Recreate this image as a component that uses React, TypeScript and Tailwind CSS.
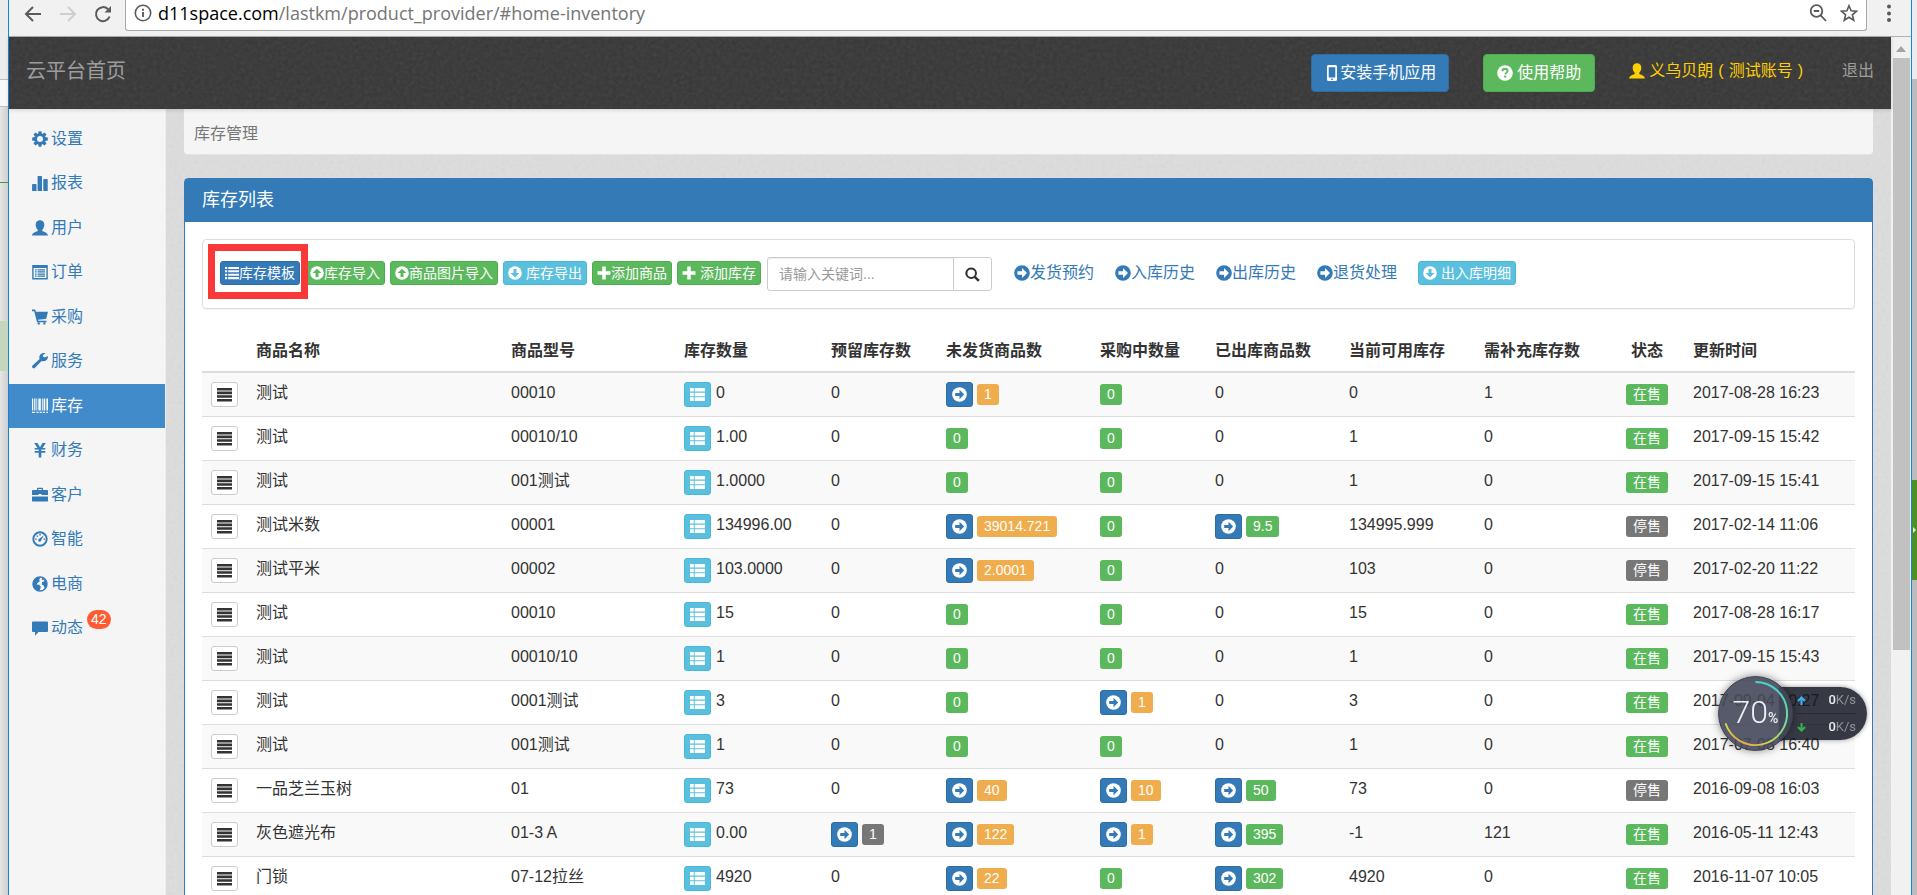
import type { ReactNode } from "react";
import { clsx } from "clsx";

type GlyphName =
  | "cog"
  | "stats"
  | "user"
  | "listAlt"
  | "cart"
  | "wrench"
  | "barcode"
  | "yen"
  | "briefcase"
  | "dashboard"
  | "globe"
  | "comment"
  | "phone"
  | "question"
  | "list"
  | "thList"
  | "justify"
  | "plus"
  | "search"
  | "up"
  | "down"
  | "right";

const ARROW = "M8 2.900 13 8 8 13.100V9.700H3.400V6.300H8z";

const circleArrow = (angle: number) => (
  <>
    <mask id={`arrow-${angle}`}>
      <rect width="16" height="16" fill="#fff" />
      <path d={ARROW} transform={`rotate(${angle} 8 8)`} fill="#000" />
    </mask>
    <circle cx="8" cy="8" r="7.800" mask={`url(#arrow-${angle})`} />
  </>
);

const GLYPHS: Record<GlyphName, ReactNode> = {
  cog: (
    <>
      <circle cx="8" cy="8" r="4.400" fill="none" stroke="currentColor" strokeWidth="2.800" />
      {[0, 45, 90, 135, 180, 225, 270, 315].map((a) => (
        <path key={a} d="M6.600 .2h2.800l.5 3H6.100z" transform={`rotate(${a} 8 8)`} />
      ))}
    </>
  ),
  stats: (
    <path d="M.8 9h3q.7 0 .7.7V16H.1V9.700q0-.7.7-.7zM6.300 1h3q.7 0 .7.7V16H5.600V1.700q0-.7.7-.7zM12 4h3q.7 0 .7.7V16h-4.400V4.700Q11.300 4 12 4z" />
  ),
  user: (
    <path d="M8 .3c2.700 0 4.300 1.700 4.300 4.200 0 2.300-.8 4.200-2 5.300v1.100c2.700 1 5.500 2 5.700 4.600H0c.2-2.600 3-3.600 5.700-4.600V9.800c-1.200-1.100-2-3-2-5.300C3.700 2 5.300.3 8 .3z" />
  ),
  listAlt: (
    <path
      fillRule="evenodd"
      d="M.2 1h15.600v14.400H.2zM1.600 4v10h12.800V4zM3 5.200h1.600v1.300H3zM5.600 5.200H13v1.300H5.600zM3 7.300h1.600v1.300H3zM5.600 7.300H13v1.300H5.600zM3 9.400h1.600v1.300H3zM5.600 9.400H13v1.300H5.600zM3 11.500h1.600v1.300H3zM5.600 11.500H13v1.300H5.600z"
    />
  ),
  cart: (
    <path d="M0 .6h2.600q.5 0 .7.500L4 2.700h12l-1.700 6.600q-.2.600-.8.700L6 10.800l.3 1h8.200v1.400H5.500q-.5 0-.6-.5L2.200 2.200H0zM5.600 13.500h2.200v1.900H5.600zM11.300 13.500h2.200v1.900h-2.200z" />
  ),
  wrench: (
    <path d="M15.700 2.900 12.800 4.600 10.900 3.600V1.900L13.600.3C11.800-.2 9.600.2 8.400 1.500 7.200 2.700 7 4.500 7.600 6L.5 12.600c-.6.600-.6 1.500 0 2.200s1.700.7 2.300.1L9.600 8c1.600.6 3.700.3 4.900-.9 1.100-1.100 1.600-2.800 1.200-4.200z" />
  ),
  barcode: (
    <path d="M0 .4h1.200v12H0zM2.200.4h1.200v12H2.200zM4.400.4h.8v12h-.8zM6.400.4h2.400v12H6.400zM9.900.4h.8v12h-.8zM11.600.4h1.600v12h-1.600zM14.400.4H16v12h-1.600zM0 13.800h3v1.300H0zM4.500 13.800h2v1.300h-2zM7.700 13.800h2v1.300h-2zM10.800 13.800h2v1.300h-2zM14.300 13.800H16v1.300h-1.700z" />
  ),
  yen: (
    <path d="M2.200 1h3.300L8 5.300 10.500 1h3.300l-3.300 5h2.800v1.600H9.300v1.500h4v1.600h-4V15.500H6.700v-4.800h-4V9.100h4V7.600h-4V6h2.800z" />
  ),
  briefcase: (
    <path
      fillRule="evenodd"
      d="M5 3V1.800Q5 .8 6 .8h4q1 0 1 1V3h4.300q.7 0 .7.700V8H9.500V7h-3v1H0V3.700Q0 3 .7 3zM6.200 3h3.600V2H6.200zM0 9.500h16v4.200q0 .7-.7.700H.7q-.7 0-.7-.7z"
    />
  ),
  dashboard: (
    <>
      <circle cx="8" cy="8" r="6.700" fill="none" stroke="currentColor" strokeWidth="1.900" />
      <path d="M11.900 4.300 9.200 9.200a1.500 1.500 0 1 1-1.900-1.500zM3.200 7.500h1.500v1.300H3.200zM4.600 4.400h1.500v1.400H4.600zM7.300 3.100h1.500v1.400H7.300zM11.600 7.500h1.500v1.300h-1.500z" />
    </>
  ),
  globe: (
    <>
      <circle cx="8" cy="8" r="7" fill="none" stroke="currentColor" strokeWidth="1.400" />
      <path d="M2 4.200C3.500 2 5.500 1.200 7 1.200l1.200 1.300L6.800 4l1.400 1-2 1.300L4.600 8.500l2.600.3 1.700 1.900-1.300 3.900C4.300 14.600 1.200 12.300.8 8zM10.200 1.700c2.400.8 4.600 3.300 4.900 6.300-.2 2.100-1.100 4-2.400 5l-.8-3.300-2.100-1.200.3-2.500 2.300-.8-.5-1.400-2.100.3z" />
    </>
  ),
  comment: <path d="M.9 1.500h14.200q.9 0 .9.900v8.700q0 .9-.9.900H6.500L3 15.800V12H.9Q0 12 0 11.100V2.400q0-.9.900-.9z" />,
  phone: (
    <path
      fillRule="evenodd"
      d="M4.500 0h7q1.500 0 1.500 1.500v13q0 1.500-1.500 1.500h-7Q3 16 3 14.500v-13Q3 0 4.500 0zM4.700 2.200v10.300h6.600V2.200zM7.200 13.500v1.400h1.600v-1.400z"
    />
  ),
  question: (
    <>
      <mask id="question-cut">
        <rect width="16" height="16" fill="#fff" />
        <path
          d="M5.500 6.200C5.500 4.500 6.600 3.700 8 3.700s2.600.8 2.600 2.200c0 1.700-2.100 1.700-2.300 3.500"
          fill="none"
          stroke="#000"
          strokeWidth="1.900"
        />
        <rect x="7.200" y="10.500" width="2.100" height="2" fill="#000" />
      </mask>
      <circle cx="8" cy="8" r="7.800" mask="url(#question-cut)" />
    </>
  ),
  list: (
    <path d="M0 1h2.500v2.300H0zM3.700 1H16v2.300H3.700zM0 4.900h2.500v2.300H0zM3.700 4.900H16v2.300H3.700zM0 8.800h2.500v2.300H0zM3.700 8.800H16v2.300H3.700zM0 12.700h2.500V15H0zM3.700 12.700H16V15H3.700z" />
  ),
  thList: (
    <path d="M0 1h4v3.900H0zM5 1h11v3.900H5zM0 6h4v3.900H0zM5 6h11v3.900H5zM0 11h4v3.900H0zM5 11h11v3.900H5z" />
  ),
  justify: <path d="M0 1h16v2.700H0zM0 4.900h16v2.700H0zM0 8.800h16v2.700H0zM0 12.700h16v2.700H0z" />,
  plus: <path d="M6 .6h4V6h5.400v4H10v5.400H6V10H.6V6H6z" />,
  search: (
    <path
      fillRule="evenodd"
      d="M6.600.5a6 6 0 0 1 5.100 9.300l4 4-1.900 1.900-4-4A6.100 6.100 0 1 1 6.600.5zM6.600 2.600a4 4 0 1 0 0 8 4 4 0 0 0 0-8z"
    />
  ),
  up: circleArrow(-90),
  down: circleArrow(90),
  right: circleArrow(0),
};

function Glyph({ name, className = "size-4" }: { name: GlyphName; className?: string }) {
  return (
    <svg viewBox="0 0 16 16" fill="currentColor" aria-hidden="true" className={clsx("shrink-0", className)}>
      {GLYPHS[name]}
    </svg>
  );
}

// Faint paper grain laid over the flat page colours
function Grain({ id, className }: { id: string; className: string }) {
  return (
    <svg aria-hidden="true" className={clsx("pointer-events-none absolute inset-0 h-full w-full", className)}>
      <filter id={id}>
        <feTurbulence type="fractalNoise" baseFrequency="0.25" numOctaves="3" />
        <feColorMatrix type="saturate" values="0" />
      </filter>
      <rect width="100%" height="100%" filter={`url(#${id})`} />
    </svg>
  );
}

const NAV: { icon: GlyphName; label: string; count?: number }[] = [
  { icon: "cog", label: "设置" },
  { icon: "stats", label: "报表" },
  { icon: "user", label: "用户" },
  { icon: "listAlt", label: "订单" },
  { icon: "cart", label: "采购" },
  { icon: "wrench", label: "服务" },
  { icon: "barcode", label: "库存" },
  { icon: "yen", label: "财务" },
  { icon: "briefcase", label: "客户" },
  { icon: "dashboard", label: "智能" },
  { icon: "globe", label: "电商" },
  { icon: "comment", label: "动态", count: 42 },
];

const TONES = {
  primary: "border-[#2e6da4] bg-[#337ab7]",
  success: "border-[#4cae4c] bg-[#5cb85c]",
  info: "border-[#46b8da] bg-[#5bc0de]",
};

type Tone = keyof typeof TONES;

const ACTIONS: { icon: GlyphName; label: string; tone: Tone; spaced?: boolean }[] = [
  { icon: "list", label: "库存模板", tone: "primary" },
  { icon: "up", label: "库存导入", tone: "success" },
  { icon: "up", label: "商品图片导入", tone: "success" },
  { icon: "down", label: "库存导出", tone: "info", spaced: true },
  { icon: "plus", label: "添加商品", tone: "success" },
  { icon: "plus", label: "添加库存", tone: "success", spaced: true },
];

const LINKS = ["发货预约", "入库历史", "出库历史", "退货处理"];

const COLUMNS = [
  { title: "", width: "w-[45px]" },
  { title: "商品名称", width: "w-[255px]" },
  { title: "商品型号", width: "w-[173px]" },
  { title: "库存数量", width: "w-[147px]" },
  { title: "预留库存数", width: "w-[115px]" },
  { title: "未发货商品数", width: "w-[154px]" },
  { title: "采购中数量", width: "w-[115px]" },
  { title: "已出库商品数", width: "w-[134px]" },
  { title: "当前可用库存", width: "w-[135px]" },
  { title: "需补充库存数", width: "w-[135px]" },
  { title: "状态", width: "w-[74px]" },
  { title: "更新时间", width: "w-[171px]" },
];

interface Row {
  name: string;
  model: string;
  stock: string;
  reserved: string;
  unshipped: string;
  purchasing: string;
  shipped: string;
  available: string;
  needed: string;
  onSale: boolean;
  updated: string;
}

const row = (
  name: string,
  model: string,
  stock: string,
  reserved: string,
  unshipped: string,
  purchasing: string,
  shipped: string,
  available: string,
  needed: string,
  onSale: boolean,
  updated: string,
): Row => ({ name, model, stock, reserved, unshipped, purchasing, shipped, available, needed, onSale, updated });

const ROWS: Row[] = [
  row("测试", "00010", "0", "0", "1", "0", "0", "0", "1", true, "2017-08-28 16:23"),
  row("测试", "00010/10", "1.00", "0", "0", "0", "0", "1", "0", true, "2017-09-15 15:42"),
  row("测试", "001测试", "1.0000", "0", "0", "0", "0", "1", "0", true, "2017-09-15 15:41"),
  row("测试米数", "00001", "134996.00", "0", "39014.721", "0", "9.5", "134995.999", "0", false, "2017-02-14 11:06"),
  row("测试平米", "00002", "103.0000", "0", "2.0001", "0", "0", "103", "0", false, "2017-02-20 11:22"),
  row("测试", "00010", "15", "0", "0", "0", "0", "15", "0", true, "2017-08-28 16:17"),
  row("测试", "00010/10", "1", "0", "0", "0", "0", "1", "0", true, "2017-09-15 15:43"),
  row("测试", "0001测试", "3", "0", "0", "1", "0", "3", "0", true, "2017-09-04 10:27"),
  row("测试", "001测试", "1", "0", "0", "0", "0", "1", "0", true, "2017-07-08 16:40"),
  row("一品芝兰玉树", "01", "73", "0", "40", "10", "50", "73", "0", false, "2016-09-08 16:03"),
  row("灰色遮光布", "01-3 A", "0.00", "1", "122", "1", "395", "-1", "121", true, "2016-05-11 12:43"),
  row("门锁", "07-12拉丝", "4920", "0", "22", "0", "302", "4920", "0", true, "2016-11-07 10:05"),
];

function IconButton({ icon, label, className }: { icon: GlyphName; label: string; className: string }) {
  return (
    <button
      type="button"
      aria-label={label}
      className={clsx("flex h-[25px] w-[27px] items-center justify-center rounded-[3px] border", className)}
    >
      <Glyph name={icon} className="size-[15px]" />
    </button>
  );
}

function Tag({ className, children }: { className: string; children: ReactNode }) {
  return (
    <span className={clsx("mt-[2px] h-[21px] rounded-[3px] px-[7px] text-sm leading-5 text-white", className)}>
      {children}
    </span>
  );
}

// A zero is a plain tag, anything else also gets a jump button
function LinkedCount({ value, tone, label }: { value: string; tone: string; label: string }) {
  if (value === "0") return <Tag className="inline-block bg-[#5cb85c]">0</Tag>;
  return (
    <div className="flex gap-1">
      <IconButton icon="right" label={label} className="border-[#2e6da4] bg-[#337ab7] text-white" />
      <Tag className={tone}>{value}</Tag>
    </div>
  );
}

function SmallButton({ icon, label, tone, spaced }: { icon: GlyphName; label: string; tone: Tone; spaced?: boolean }) {
  return (
    <button
      type="button"
      className={clsx(
        "flex h-6 shrink-0 items-center rounded-[3px] border px-1 text-sm leading-5 whitespace-nowrap text-white",
        spaced && "gap-1",
        TONES[tone],
      )}
    >
      <Glyph name={icon} className="size-[14px]" />
      {label}
    </button>
  );
}

function BrowserBar() {
  return (
    <div className="flex h-[37px] shrink-0 items-start border-b border-[#b0b0b0] bg-[#f1f1f1] pl-[15px] text-[#5a5a5a]">
      <div className="flex h-[27px] w-[101px] items-center gap-[17px]">
        <svg viewBox="0 0 18 18" className="size-[18px]" fill="none" stroke="currentColor" strokeWidth="2">
          <path d="M17 9H2M9 2 2 9l7 7" />
        </svg>
        <svg viewBox="0 0 18 18" className="size-[18px] text-[#cfcfcf]" fill="none" stroke="currentColor" strokeWidth="2">
          <path d="M1 9h15M9 2l7 7-7 7" />
        </svg>
        <svg viewBox="0 0 18 18" className="size-[18px]" fill="none" stroke="currentColor" strokeWidth="2">
          <path d="M15.600 11.500A7 7 0 1 1 14 4.200" />
          <path d="M17 1v6.500h-6.500z" fill="currentColor" stroke="none" />
        </svg>
      </div>
      <div className="flex h-[31px] flex-1 items-center rounded-b-[3px] border border-t-0 border-[#a8a8a8] bg-white pr-2 pb-1 pl-2">
        <svg viewBox="0 0 18 18" className="size-[18px]" fill="none" stroke="currentColor" strokeWidth="1.600">
          <circle cx="9" cy="9" r="7.700" />
          <path d="M9 8v5M9 4.800v1.900" strokeWidth="1.900" />
        </svg>
        <span className="ml-[6px] flex-1 font-['Open_Sans','Noto_Sans_CJK_SC',sans-serif] text-lg leading-6 text-[#757575]">
          <span className="text-black">d11space.com</span>/lastkm/product_provider/#home-inventory
        </span>
        <svg viewBox="0 0 18 18" className="size-[18px]" fill="none" stroke="currentColor" strokeWidth="1.800">
          <circle cx="7.500" cy="7" r="5.800" />
          <path d="M4.800 7h5.400M11.700 11.300 17 17" />
        </svg>
        <svg viewBox="0 0 18 18" className="ml-[13px] size-[18px]" fill="none" stroke="currentColor" strokeWidth="1.600">
          <path d="m9 1.700 2.100 5.100 5.500.4-4.200 3.600 1.300 5.400L9 13.300l-4.700 2.900 1.300-5.400L1.400 7.200l5.500-.4z" />
        </svg>
      </div>
      <svg viewBox="0 0 6 22" className="mx-[19px] mt-[3px] h-[22px] w-[6px]" fill="currentColor">
        <circle cx="3" cy="3.500" r="2" />
        <circle cx="3" cy="10.500" r="2" />
        <circle cx="3" cy="17" r="2" />
      </svg>
    </div>
  );
}

function Navbar() {
  return (
    <header className="relative z-10 flex h-[72px] shrink-0 items-start bg-[#363636] px-[17px] pt-[17px] text-[#9d9d9d] shadow-[0_1px_4px_rgba(0,0,0,0.15)]">
      <Grain id="grain-dark" className="opacity-10" />
      <a href="#home" className="relative text-xl leading-[34px]">
        云平台首页
      </a>
      <div className="relative ml-auto flex items-start text-base">
        <button
          type="button"
          className="flex h-[38px] items-center rounded border border-[#2e6da4] bg-[#337ab7] px-3 text-white"
        >
          <Glyph name="phone" />
          安装手机应用
        </button>
        <button
          type="button"
          className="ml-[34px] flex h-[38px] items-center gap-1 rounded border border-[#4cae4c] bg-[#5cb85c] px-[13px] text-white"
        >
          <Glyph name="question" />
          使用帮助
        </button>
        <a href="#account" className="ml-[34px] flex items-center gap-1 leading-[34px] text-[#ffd000]">
          <Glyph name="user" />
          <span>
            义乌贝朗<span className="px-[5px]">(</span>测试账号<span className="px-[5px]">)</span>
          </span>
        </a>
        <a href="#logout" className="ml-[34px] leading-[34px]">
          退出
        </a>
      </div>
    </header>
  );
}

function Sidebar() {
  return (
    <nav className="w-[157px] shrink-0 border-r border-[#eee] bg-[#f5f5f5] pt-2">
      <ul className="flex h-[533px] flex-col justify-between">
        {NAV.map(({ icon, label, count }) => (
          <li key={label}>
            <a
              href={`#${icon}`}
              className={clsx(
                "flex h-11 items-center gap-[3px] pl-[23px] text-base",
                icon === "barcode" ? "bg-[#428bca] text-white" : "text-[#337ab7]",
              )}
            >
              <Glyph name={icon} />
              {label}
              {count && (
                <span className="mb-4 ml-px h-[19px] rounded-full bg-[#ff5c33] px-1 text-sm leading-[19px] text-white">
                  {count}
                </span>
              )}
            </a>
          </li>
        ))}
      </ul>
    </nav>
  );
}

function Toolbar() {
  return (
    <div className="flex h-[70px] items-start rounded border border-[#ddd] px-[17px] pt-[21px] shadow-[0_1px_1px_rgba(0,0,0,0.05)]">
      <div className="relative flex gap-[5px]">
        {ACTIONS.map((action) => (
          <SmallButton key={action.label} {...action} />
        ))}
        <div className="pointer-events-none absolute -top-[17px] -left-3 h-[55px] w-[100px] border-[7px] border-[#fb3838]" />
      </div>
      <form className="-mt-1 ml-[6px] flex h-[34px] shrink-0" onSubmit={(e) => e.preventDefault()}>
        <input
          type="text"
          aria-label="关键词"
          placeholder="请输入关键词..."
          className="w-[187px] rounded-l-[3px] border border-[#ccc] px-[11px] text-sm shadow-[inset_0_1px_1px_rgba(0,0,0,0.075)] placeholder:text-[#999]"
        />
        <button
          type="submit"
          aria-label="搜索"
          className="-ml-px flex w-[39px] items-center justify-center rounded-r-[3px] border border-[#ccc] bg-white text-[#333]"
        >
          <Glyph name="search" className="size-[15px]" />
        </button>
      </form>
      <div className="ml-[22px] flex gap-[21px]">
        {LINKS.map((label) => (
          <a key={label} href={`#${label}`} className="flex items-center text-base leading-6 whitespace-nowrap text-[#337ab7]">
            <Glyph name="right" />
            {label}
          </a>
        ))}
        <SmallButton icon="down" label="出入库明细" tone="info" spaced />
      </div>
    </div>
  );
}

function InventoryTable() {
  return (
    <table className="mt-4 w-full table-fixed border-collapse text-left text-base leading-[22px] text-[#333]">
      <thead>
        <tr className="border-b-2 border-[#ddd]">
          {COLUMNS.map(({ title, width }) => (
            <th
              key={title}
              className={clsx(
                "h-[47px] px-[9px] pt-[5px] font-bold whitespace-nowrap",
                width,
                title === "状态" && "text-center",
              )}
            >
              {title}
            </th>
          ))}
        </tr>
      </thead>
      <tbody>
        {ROWS.map((item) => (
          <tr
            key={`${item.model}-${item.updated}`}
            className="h-11 border-b border-[#ddd] align-top odd:bg-[#f9f9f9] *:px-[9px] *:pt-[9px]"
          >
            <td>
              <IconButton icon="justify" label="操作" className="border-[#ccc] bg-white" />
            </td>
            <td>{item.name}</td>
            <td>{item.model}</td>
            <td>
              <div className="flex gap-[5px]">
                <IconButton icon="thList" label="库存明细" className="border-[#46b8da] bg-[#5bc0de] text-white" />
                {item.stock}
              </div>
            </td>
            <td>
              {item.reserved === "0" ? "0" : <LinkedCount value={item.reserved} tone="bg-[#777]" label="预留明细" />}
            </td>
            <td>
              <LinkedCount value={item.unshipped} tone="bg-[#f0ad4e]" label="未发货明细" />
            </td>
            <td>
              <LinkedCount value={item.purchasing} tone="bg-[#f0ad4e]" label="采购明细" />
            </td>
            <td>
              {item.shipped === "0" ? "0" : <LinkedCount value={item.shipped} tone="bg-[#5cb85c]" label="出库明细" />}
            </td>
            <td>{item.available}</td>
            <td>{item.needed}</td>
            <td className="text-center">
              <Tag className={clsx("inline-block", item.onSale ? "bg-[#5cb85c]" : "bg-[#777]")}>
                {item.onSale ? "在售" : "停售"}
              </Tag>
            </td>
            <td className="whitespace-nowrap">{item.updated}</td>
          </tr>
        ))}
      </tbody>
    </table>
  );
}

function Scrollbar() {
  return (
    <div className="flex w-5 shrink-0 flex-col items-center bg-[#f1f1f1]">
      <svg viewBox="0 0 10 6" className="mt-[9px] mb-[6px] h-[6px] w-[10px]" fill="#a3a3a3">
        <path d="M0 6 5 0l5 6z" />
      </svg>
      <div className="h-[592px] w-[17px] bg-[#c1c1c1]" />
    </div>
  );
}

// Floating system monitor, sits on top of every window
function SpeedMeter() {
  const speeds = [
    { color: "#3fb0f0", path: "M4.500 9V1.500M1 5l3.500-3.500L8 5" },
    { color: "#35b44a", path: "M4.500 0v7.500M1 4l3.500 3.500L8 4" },
  ];
  return (
    <div className="fixed top-[676px] right-[50px] flex items-center font-['Roboto','Noto_Sans_CJK_SC',sans-serif]">
      <div className="relative z-10 flex size-[75px] items-baseline justify-center rounded-full border border-[#3d404b] bg-[#44485a]/90 pt-[15px] text-[#eef0f4] shadow-[0_0_8px_rgba(0,0,0,0.45)]">
        <svg viewBox="0 0 74 74" className="absolute inset-0 h-full w-full" fill="none">
          <linearGradient id="meter" x1="0.7" y1="0" x2="0.3" y2="1">
            <stop offset="0" stopColor="#45d3cf" />
            <stop offset="0.5" stopColor="#7cd992" />
            <stop offset="0.85" stopColor="#d8d44e" />
            <stop offset="1" stopColor="#e5a545" />
          </linearGradient>
          <path d="M37 5a32 32 0 1 1-30.400 41.900" stroke="url(#meter)" strokeWidth="2" />
        </svg>
        <span className="text-[32px] leading-10 font-light">70</span>
        <span className="text-sm font-medium">%</span>
      </div>
      <div className="-ml-[14px] flex h-[53px] w-[88px] flex-col rounded-r-full bg-[#141823]/85 pr-[11px] pl-[18px] shadow-[0_0_5px_rgba(0,0,0,0.4)]">
        {speeds.map(({ color, path }) => (
          <div
            key={color}
            className="flex flex-1 items-center border-[#282b34] text-[13px] leading-4 text-[#8f929b] first:border-b"
          >
            <svg viewBox="0 0 9 9" className="mr-auto size-[9px]" fill="none" stroke={color} strokeWidth="2">
              <path d={path} />
            </svg>
            <span className="font-medium text-[#eceef2]">0</span>K/s
          </div>
        ))}
      </div>
    </div>
  );
}

export default function App() {
  return (
    <div className="flex h-screen overflow-hidden bg-[#dedede] font-['Liberation_Sans','Noto_Sans_CJK_SC',sans-serif]">
      <div className="flex w-2 shrink-0 flex-col bg-linear-to-r from-[#e6e6e6] to-[#cfcfcf]">
        <div className="h-[79px] bg-[#ececec]" />
        <div className="h-[28px] border-y border-[#bdbdc4] bg-[#f8f8f8]" />
        <div className="h-[76px] border-b border-[#4f9a28]" />
        <div className="mt-[138px] h-[50px] bg-[#c5d6bf]" />
      </div>

      <div className="flex min-w-0 flex-1 flex-col border-x border-[#1883d7]">
        <BrowserBar />
        <div className="flex min-h-0 flex-1">
          <div className="flex min-w-0 flex-1 flex-col">
            <Navbar />
            <div className="flex min-h-0 flex-1">
              <Sidebar />
              <main className="relative min-w-0 flex-1 bg-[#dddddd] px-[18px]">
                <Grain id="grain-light" className="opacity-10" />
                <div className="relative h-[46px] rounded-b border-b border-[#e3e3e3] bg-[#f5f5f5] px-[10px] text-base leading-[50px] text-[#777]">
                  库存管理
                </div>
                <section className="relative mt-[23px] rounded-t border border-[#337ab7] bg-white">
                  <h1 className="h-[43px] bg-[#337ab7] px-[17px] text-lg leading-[42px] text-white">库存列表</h1>
                  <div className="px-[17px] pt-[17px]">
                    <Toolbar />
                    <InventoryTable />
                  </div>
                </section>
              </main>
            </div>
          </div>
          <Scrollbar />
        </div>
      </div>

      <div className="flex w-[5px] shrink-0 flex-col bg-[#bcbcbe]">
        <div className="h-[79px] bg-[#ececec]" />
        <div className="mt-[401px] flex h-[100px] items-center bg-[#4a9126]">
          <svg viewBox="0 0 4 6" className="ml-px h-[6px] w-[4px]" fill="#e6efe2">
            <path d="M0 0l3 3-3 3z" />
          </svg>
        </div>
      </div>

      <SpeedMeter />
    </div>
  );
}
